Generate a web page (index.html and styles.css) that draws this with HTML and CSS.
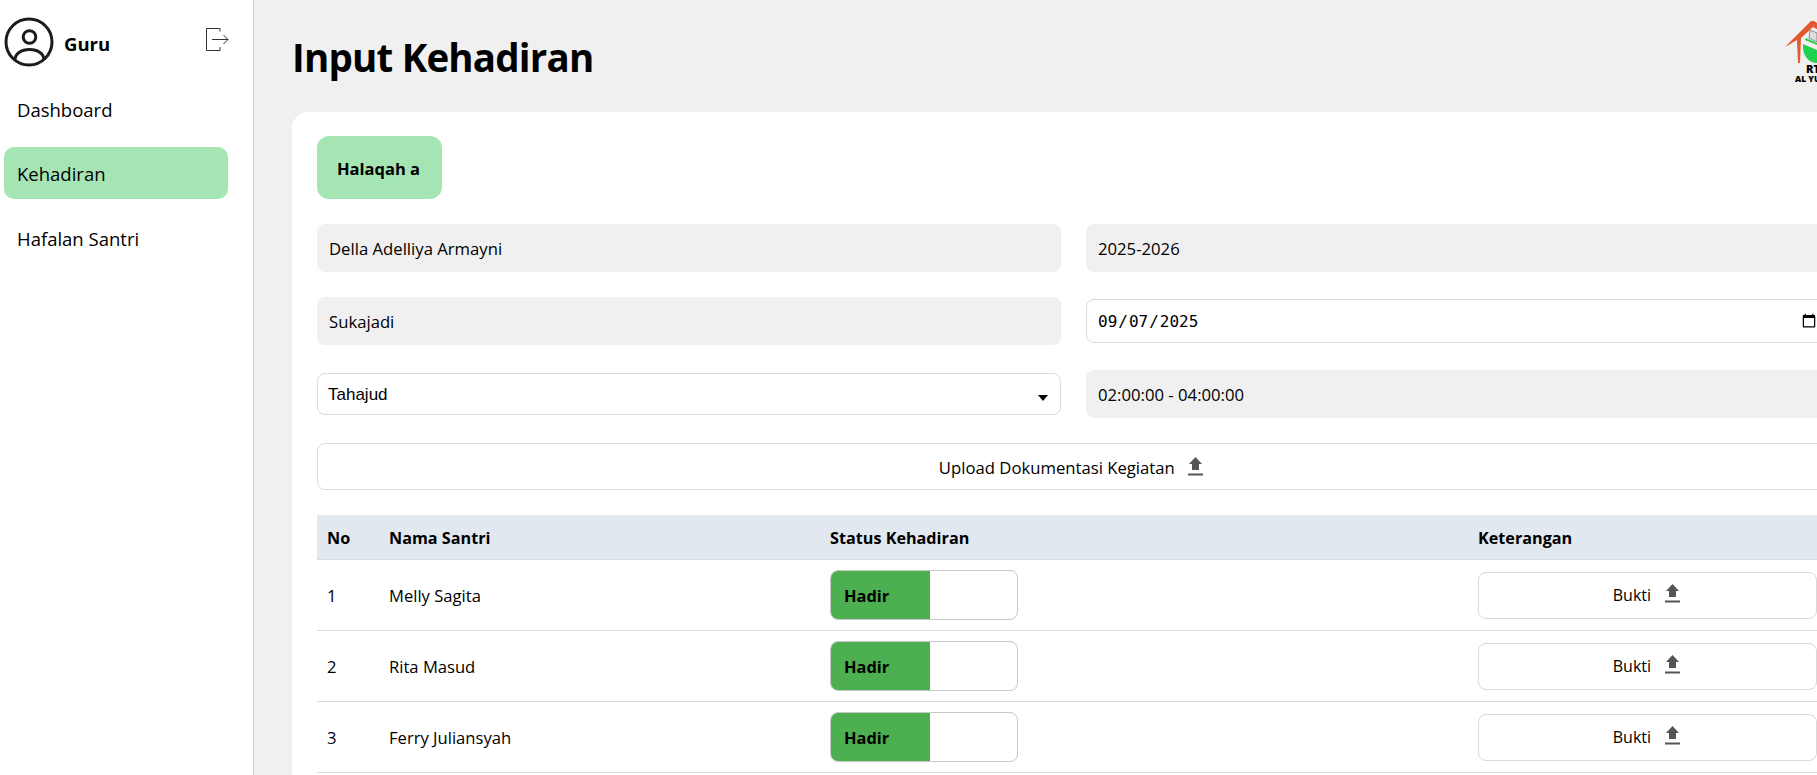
FILE: index.html
```html
<!DOCTYPE html>
<html lang="en">
<head>
  <meta charset="UTF-8">
  <title>Input Kehadiran</title>
  <link rel="stylesheet" href="styles.css">
</head>
<body>
  <div class="layout">
    <aside class="sidebar">
      <div class="profile">
        <svg class="avatar" viewBox="0 0 50 50" fill="none" stroke="#1c1c1c" stroke-width="3">
          <circle cx="25" cy="25" r="23"/>
          <circle cx="25.500" cy="20" r="6.300"/>
          <path d="M11 43c0-6 6-10.500 14.500-10.500S40 37 40 43"/>
        </svg>
        <span class="profile-name">Guru</span>
        <svg class="logout" viewBox="0 0 24 25" fill="none" stroke="#333" stroke-width="1">
          <path d="M15 4.500V1.500H1.500v22H15V20"/>
          <path d="M7 12.500h16M18.500 8l4.500 4.500-4.500 4.500"/>
        </svg>
      </div>
      <nav class="menu">
        <a class="menu-item">Dashboard</a>
        <a class="menu-item active">Kehadiran</a>
        <a class="menu-item">Hafalan Santri</a>
      </nav>
    </aside>
    <main class="content">
      <header class="page-head">
        <h1>Input Kehadiran</h1>
        <svg class="logo" viewBox="0 0 60 46">
          <path d="M0 27 26 1h3l31 21v3L28 7 16 18l-1 25h-2l-1-23z" fill="#e2582f"/>
          <path d="M25 10l7 3v9l-8-4z" fill="#ddd" stroke="#777" stroke-width=".8"/>
          <path d="M21 18l11 5v2l-12-5z" fill="#1fd24d"/>
          <path d="M18 24l14 6v13c-8 0-15-7-14-19z" fill="#1fd24d"/>
        </svg>
        <span class="logo-rt">RT</span>
        <span class="logo-sub">AL YU</span>
      </header>
      <section class="card">
        <button class="halaqah">Halaqah a</button>
        <div class="form-grid">
          <div class="field-static">Della Adelliya Armayni</div>
          <div class="field-static">2025-2026</div>
          <div class="field-static">Sukajadi</div>
          <div class="field-cell"><input class="date-input" type="date" value="2025-09-07"></div>
          <div class="field-cell select-wrap">
            <select class="select-input">
              <option>Tahajud</option>
            </select>
          </div>
          <div class="field-static">02:00:00 - 04:00:00</div>
        </div>
        <button class="upload-btn">
          Upload Dokumentasi Kegiatan
          <svg class="upload-icon" viewBox="0 0 15 19"><path d="M7.500 0 14 7h-3v6H4V7H1zM0 16.500h15v2H0z"/></svg>
        </button>
        <table class="santri-table">
          <thead>
            <tr>
              <th class="col-no">No</th>
              <th class="col-name">Nama Santri</th>
              <th class="col-status">Status Kehadiran</th>
              <th>Keterangan</th>
            </tr>
          </thead>
          <tbody>
            <tr>
              <td>1</td>
              <td>Melly Sagita</td>
              <td><div class="status"><span class="status-on">Hadir</span></div></td>
              <td><button class="bukti-btn">Bukti <svg class="upload-icon" viewBox="0 0 15 19"><path d="M7.500 0 14 7h-3v6H4V7H1zM0 16.500h15v2H0z"/></svg></button></td>
            </tr>
            <tr>
              <td>2</td>
              <td>Rita Masud</td>
              <td><div class="status"><span class="status-on">Hadir</span></div></td>
              <td><button class="bukti-btn">Bukti <svg class="upload-icon" viewBox="0 0 15 19"><path d="M7.500 0 14 7h-3v6H4V7H1zM0 16.500h15v2H0z"/></svg></button></td>
            </tr>
            <tr>
              <td>3</td>
              <td>Ferry Juliansyah</td>
              <td><div class="status"><span class="status-on">Hadir</span></div></td>
              <td><button class="bukti-btn">Bukti <svg class="upload-icon" viewBox="0 0 15 19"><path d="M7.500 0 14 7h-3v6H4V7H1zM0 16.500h15v2H0z"/></svg></button></td>
            </tr>
          </tbody>
        </table>
      </section>
    </main>
  </div>
</body>
</html>
```

FILE: styles.css
```css
html, body {
  margin: 0;
  padding: 0;
  height: 100%;
  overflow: hidden;
}

body {
  font-family: "Open Sans", "Noto Sans", sans-serif;
  color: #000;
  background-color: #f0f0f0;
}

.layout {
  display: flex;
  width: 1880px;
  height: 775px;
}

/* sidebar */
.sidebar {
  width: 249px;
  flex-shrink: 0;
  background-color: #fff;
  border-right: 1px solid #d4d4d4;
  padding: 17px 0 0 4px;
}

.profile {
  display: flex;
  align-items: center;
  width: 225px;
  height: 50px;
}

.avatar {
  width: 50px;
  height: 50px;
}

.profile-name {
  margin-left: 10px;
  margin-top: 2px;
  font-size: 18.500px;
  font-weight: 700;
}

.logout {
  width: 24px;
  height: 25px;
  margin-left: auto;
  margin-bottom: 6px;
}

.menu {
  display: flex;
  flex-direction: column;
  width: 224px;
  margin-top: 16px;
  gap: 12px;
}

.menu-item {
  display: block;
  height: 52px;
  line-height: 54px;
  padding-left: 13px;
  border-radius: 10px;
  font-size: 18.500px;
}

.menu-item:last-child {
  margin-top: 1px;
}

.menu-item.active {
  background-color: #a5e5b3;
}

/* main */
.content {
  flex: 1;
  padding: 0 0 0 38px;
  min-width: 0;
}

.page-head {
  position: relative;
  display: flex;
  align-items: center;
  height: 112px;
}

.page-head h1 {
  margin: 0;
  padding-top: 2px;
  font-size: 38.500px;
  font-weight: 700;
  letter-spacing: -0.8px;
}

.logo {
  position: absolute;
  left: 1493px;
  top: 20px;
  width: 60px;
  height: 46px;
}

.logo-rt,
.logo-sub {
  position: absolute;
  font-weight: 800;
}

.logo-rt {
  left: 1514px;
  top: 64px;
  font-size: 11px;
  line-height: 10px;
}

.logo-sub {
  left: 1503px;
  top: 75px;
  font-size: 8.500px;
  line-height: 8px;
}

.card {
  width: 1560px;
  height: 700px;
  box-sizing: border-box;
  padding: 24px 25px;
  background-color: #fff;
  border-radius: 16px;
}

.halaqah {
  display: block;
  width: 125px;
  height: 63px;
  padding: 2px 2px 0 0;
  border: none;
  border-radius: 12px;
  background-color: #a5e5b3;
  font-family: inherit;
  font-size: 16.500px;
  font-weight: 700;
  color: #000;
}

.form-grid {
  display: grid;
  grid-template-columns: 744px 744px;
  column-gap: 25px;
  grid-auto-rows: 48px;
  row-gap: 25px;
  margin-top: 25px;
}

.field-static {
  display: flex;
  align-items: center;
  padding-left: 12px;
  background-color: #f0f0f0;
  border-radius: 8px;
  font-size: 16.700px;
}

.field-cell {
  display: flex;
  align-items: center;
}

.date-input,
.select-input {
  width: 100%;
  box-sizing: border-box;
  border: 1px solid #d9d9d9;
  border-radius: 8px;
  background-color: #fff;
  color: #000;
}

.date-input {
  height: 44px;
  padding: 0 10px;
  font-family: "DejaVu Sans Mono", monospace;
  font-size: 16px;
}

.select-wrap {
  position: relative;
}

/* select arrow drawn by hand, the native one is too different */
.select-wrap::after {
  content: "";
  position: absolute;
  right: 13px;
  top: 25px;
  border-left: 5.500px solid transparent;
  border-right: 5.500px solid transparent;
  border-top: 6px solid #000;
  pointer-events: none;
}

.select-input {
  height: 42px;
  padding: 0 10px;
  appearance: none;
  font-family: "Liberation Sans", sans-serif;
  font-size: 17px;
}

.upload-btn {
  display: block;
  width: 100%;
  height: 47px;
  margin-top: 25px;
  padding: 2px 2px 0 0;
  background-color: #fff;
  border: 1px solid #d9d9d9;
  border-radius: 8px;
  font-family: inherit;
  font-size: 16.700px;
  color: #000;
}

.upload-icon {
  width: 15px;
  height: 19px;
  margin-left: 9px;
  fill: #555;
  vertical-align: -2px;
}

.santri-table {
  width: 100%;
  margin-top: 25px;
  table-layout: fixed;
  border-collapse: collapse;
  font-size: 16.600px;
}

.santri-table th {
  height: 43px;
  padding: 1px 10px 0;
  background-color: #e2e8f0;
  border-bottom: 1px solid #d9d9d9;
  text-align: left;
  font-size: 16.200px;
  font-weight: 700;
}

.santri-table td {
  height: 70px;
  padding: 0 10px;
  border-bottom: 1px solid #d9d9d9;
}

.col-no {
  width: 42px;
}

.col-name {
  width: 421px;
}

.col-status {
  width: 628px;
}

.status {
  display: flex;
  width: 188px;
  height: 50px;
  box-sizing: border-box;
  border: 1px solid #c8c8c8;
  border-radius: 8px;
  overflow: hidden;
}

.status-on {
  display: flex;
  align-items: center;
  width: 99px;
  padding-left: 13px;
  box-sizing: border-box;
  background-color: #4caf50;
  font-size: 16.400px;
  font-weight: 700;
}

.bukti-btn {
  display: block;
  width: 100%;
  height: 47px;
  padding: 0 2px 0 0;
  background-color: #fff;
  border: 1px solid #d9d9d9;
  border-radius: 8px;
  font-family: inherit;
  font-size: 16px;
  color: #000;
}

.bukti-btn .upload-icon {
  margin-left: 10px;
}
```
